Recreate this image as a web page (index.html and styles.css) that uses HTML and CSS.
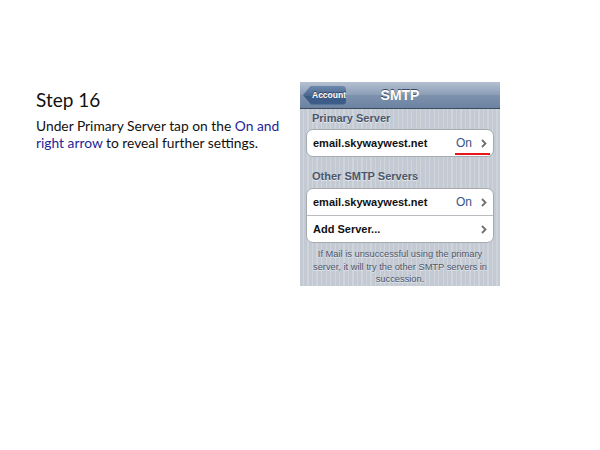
FILE: index.html
```html
<!DOCTYPE html>
<html lang="en">
<head>
  <meta charset="UTF-8">
  <title>Step 16 - SMTP</title>
  <link rel="stylesheet" href="styles.css">
</head>
<body>
  <div class="slide">
    <div class="step-text">
      <h1>Step 16</h1>
      <p>Under Primary Server tap on the <span class="hl">On and</span><br><span class="hl">right arrow</span> to reveal further settings.</p>
    </div>

    <div class="phone">
      <div class="navbar">
        <span class="back-btn">Account</span>
        <span class="nav-title">SMTP</span>
      </div>
      <div class="phone-body">
        <div class="section-header first">Primary Server</div>
        <div class="group">
          <div class="row">
            <span class="row-label">email.skywaywest.net</span>
            <span class="row-value marked">On
              <svg class="chev" width="6" height="9" viewBox="0 0 6 9"><path d="M1 1 L4.5 4.5 L1 8" fill="none" stroke="#6f6f6f" stroke-width="1.8"/></svg>
            </span>
          </div>
        </div>

        <div class="section-header">Other SMTP Servers</div>
        <div class="group">
          <div class="row">
            <span class="row-label">email.skywaywest.net</span>
            <span class="row-value">On
              <svg class="chev" width="6" height="9" viewBox="0 0 6 9"><path d="M1 1 L4.5 4.5 L1 8" fill="none" stroke="#6f6f6f" stroke-width="1.8"/></svg>
            </span>
          </div>
          <div class="row">
            <span class="row-label">Add Server...</span>
            <span class="row-value">
              <svg class="chev" width="6" height="9" viewBox="0 0 6 9"><path d="M1 1 L4.5 4.5 L1 8" fill="none" stroke="#6f6f6f" stroke-width="1.8"/></svg>
            </span>
          </div>
        </div>

        <p class="footer-note">If Mail is unsuccessful using the primary server, it will try the other SMTP servers in succession.</p>
      </div>
    </div>
  </div>
</body>
</html>
```

FILE: styles.css
```css
body {
  margin: 0;
  background-color: white;
  font-family: 'Lato', 'Liberation Sans', sans-serif;
}
.slide {
  width: 600px;
  height: 450px;
  display: flex;
  padding: 82px 0 0 36px;
  box-sizing: border-box;
}
.step-text {
  width: 264px;
  padding-top: 5px;
}
h1 {
  font-size: 19px;
  font-weight: normal;
  color: #111;
  margin: 0 0 4px 0;
  line-height: 26px;
}
p {
  margin: 0;
}
.step-text p {
  font-size: 13.8px;
  line-height: 17px;
  color: #111;
}
.hl {
  color: #25239a;
}

.phone {
  width: 200px;
  height: 204px;
  font-family: 'Liberation Sans', Arial, sans-serif;
  background: repeating-linear-gradient(90deg, #c3cad3 0px, #c3cad3 3px, #d0d5db 3px, #d0d5db 4.5px);
  overflow: hidden;
}
.navbar {
  height: 26px;
  border-bottom: 1px solid #3e4b5e;
  background: linear-gradient(#b4c0d0, #8a9db6 50%, #7d91ad 51%, #6c83a2);
  display: flex;
  align-items: center;
  padding-left: 3px;
  position: relative;
}
.back-btn {
  height: 19px;
  width: 43px;
  box-sizing: border-box;
  padding-left: 9px;
  font-size: 8.5px;
  font-weight: bold;
  color: white;
  line-height: 19px;
  background: linear-gradient(#6c87ad, #4a6890 50%, #3a5a85 51%, #3e5e8a);
  clip-path: polygon(0 50%, 8px 0, 100% 0, 100% 100%, 8px 100%);
  border-radius: 0 4px 4px 0;
  text-shadow: 0 -1px 0 #2a3c58;
}
.nav-title {
  position: absolute;
  left: 0;
  right: 0;
  text-align: center;
  font-size: 14px;
  font-weight: bold;
  color: white;
  text-shadow: 0 -1px 0 #3a4a63;
}
.phone-body {
  padding: 0 6px;
}
.section-header {
  font-size: 11px;
  font-weight: bold;
  color: #4c566c;
  text-shadow: 0 1px 0 #e6e9ec;
  padding: 12px 6px 5px 6px;
  line-height: 14px;
}
.section-header.first {
  padding-top: 2px;
  padding-bottom: 4px;
}
.group {
  background-color: white;
  border: 1px solid #a7abb0;
  border-radius: 7px;
}
.row {
  height: 26px;
  display: flex;
  align-items: center;
  justify-content: space-between;
  padding: 0 6px;
}
.row + .row {
  border-top: 1px solid #b8bcc0;
}
.row-label {
  font-size: 11px;
  font-weight: bold;
  color: #111;
}
.row-value {
  font-size: 12px;
  color: #385487;
  display: flex;
  align-items: center;
  gap: 9px;
  position: relative;
}
.chev {
  display: block;
}
.marked::after {
  content: "";
  position: absolute;
  left: -1px;
  right: -3px;
  bottom: -5px;
  height: 2px;
  background-color: #e8141c;
}
.footer-note {
  font-size: 9.3px;
  line-height: 12.5px;
  color: #4c566c;
  text-align: center;
  text-shadow: 0 1px 0 #e6e9ec;
  padding: 5px 2px 0 2px;
}
```
